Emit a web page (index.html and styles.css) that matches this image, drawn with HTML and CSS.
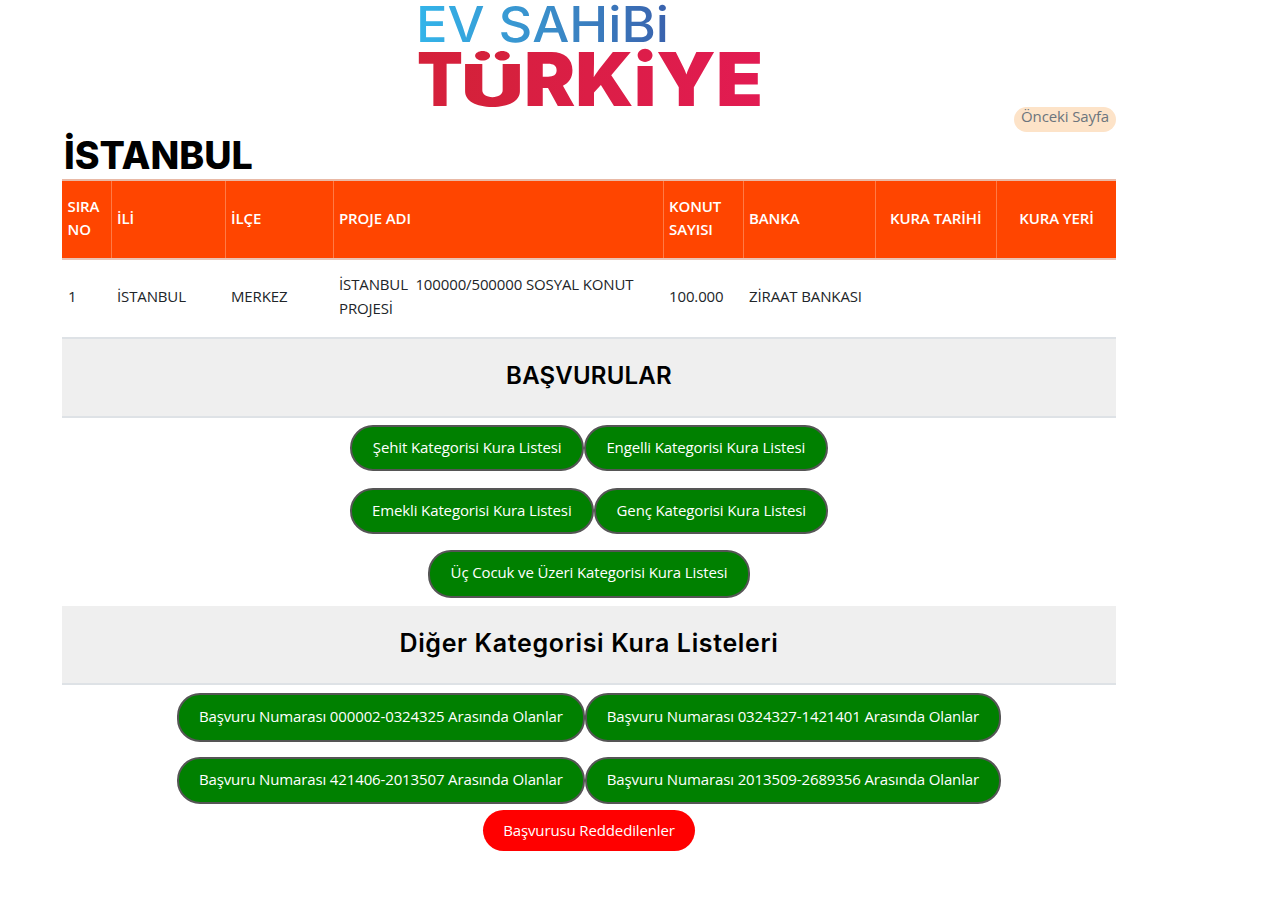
FILE: index.html
```html
<!DOCTYPE html>
<html lang="tr">
<head>
<meta charset="utf-8">
<title>İstanbul</title>
<link rel="stylesheet" href="styles.css">
</head>
<body>
<div class="page">
  <header class="logo-wrap">
    <svg class="logo" viewBox="0 0 350 110" width="350" height="110" role="img" aria-label="Ev Sahibi Türkiye">
      <defs>
        <linearGradient id="blue" gradientUnits="userSpaceOnUse" x1="0" x2="252" y1="0" y2="0">
          <stop offset="0" stop-color="#33b5ea"/>
          <stop offset="0.5" stop-color="#3a8fcb"/>
          <stop offset="1" stop-color="#3a62ad"/>
        </linearGradient>
        <linearGradient id="red" gradientUnits="userSpaceOnUse" x1="0" x2="344" y1="0" y2="0">
          <stop offset="0" stop-color="#d4213a"/>
          <stop offset="1" stop-color="#e21b52"/>
        </linearGradient>
      </defs>
      <text class="logo-top" x="0" y="42" textLength="253" lengthAdjust="spacingAndGlyphs" fill="url(#blue)">EV SAHiBi</text>
      <g fill="url(#red)">
        <text class="logo-bottom" x="1" y="106" textLength="46" lengthAdjust="spacingAndGlyphs">T</text>
        <text class="logo-bottom" transform="translate(45 106) scale(1 0.78)" x="0" y="0" textLength="63" lengthAdjust="spacingAndGlyphs">Ü</text>
        <text class="logo-bottom" x="108" y="106" textLength="239" lengthAdjust="spacingAndGlyphs">RKiYE</text>
      </g>
    </svg>
  </header>
  <div class="back-row"><a class="back" href="#">Önceki Sayfa</a></div>
  <h1 class="city">İSTANBUL</h1>
  <table class="projects">
    <colgroup>
      <col class="c1"><col class="c2"><col class="c3"><col class="c4"><col class="c5"><col class="c6"><col class="c7"><col class="c8">
    </colgroup>
    <thead>
      <tr>
        <th>SIRA NO</th><th>İLİ</th><th>İLÇE</th><th>PROJE ADI</th><th>KONUT SAYISI</th><th>BANKA</th>
        <th class="center">KURA TARİHİ</th><th class="center">KURA YERİ</th>
      </tr>
    </thead>
    <tbody>
      <tr>
        <td>1</td><td>İSTANBUL</td><td>MERKEZ</td>
        <td>İSTANBUL&nbsp; 100000/500000 SOSYAL KONUT PROJESİ</td>
        <td>100.000</td><td>ZİRAAT BANKASI</td><td></td><td></td>
      </tr>
    </tbody>
  </table>
  <h2 class="band">BAŞVURULAR</h2>
  <div class="group group-a">
    <div class="row"><a class="btn" href="#">Şehit Kategorisi Kura Listesi</a><a class="btn" href="#">Engelli Kategorisi Kura Listesi</a></div>
    <div class="row"><a class="btn" href="#">Emekli Kategorisi Kura Listesi</a><a class="btn" href="#">Genç Kategorisi Kura Listesi</a></div>
    <div class="row row-tight"><a class="btn btn-a2" href="#">Üç Cocuk ve Üzeri Kategorisi Kura Listesi</a></div>
  </div>
  <h2 class="band band-wide">Diğer Kategorisi Kura Listeleri</h2>
  <div class="group group-b">
    <div class="row"><a class="btn btn-b1" href="#">Başvuru Numarası 000002-0324325 Arasında Olanlar</a><a class="btn btn-b1" href="#">Başvuru Numarası 0324327-1421401 Arasında Olanlar</a></div>
    <div class="row"><a class="btn btn-b2" href="#">Başvuru Numarası 421406-2013507 Arasında Olanlar</a><a class="btn btn-b2" href="#">Başvuru Numarası 2013509-2689356 Arasında Olanlar</a></div>
    <div class="row row-red"><a class="btn btn-red" href="#">Başvurusu Reddedilenler</a></div>
  </div>
</div>
</body>
</html>
```
FILE: styles.css
```css
* { box-sizing: border-box; }
html, body { margin: 0; padding: 0; background: #fff; }
body {
  font-family: "Open Sans", "Noto Sans", "Liberation Sans", sans-serif;
  font-size: 15px;
  letter-spacing: -0.13px;
  color: #212529;
  height: 921px;
  overflow: hidden;
}
.page { width: 1054px; margin-left: 62px; }
.logo-wrap { display: flex; justify-content: center; height: 107px; }
.logo { display: block; flex: none; overflow: visible; margin-left: 3px; }
.logo-top { font-family: "Inter", sans-serif; font-size: 49px; font-weight: 500; letter-spacing: 0; }
.logo-bottom { font-family: "Inter", sans-serif; font-size: 74px; font-weight: 900; letter-spacing: 0; }
.back-row { display: flex; justify-content: flex-end; height: 25px; }
.back {
  background: #fde3c8;
  color: #6c757d;
  border-radius: 13px;
  padding: 0 7px;
  height: 25px;
  line-height: 19px;
  text-decoration: none;
}
.city {
  font-family: "Inter", sans-serif;
  font-weight: 800;
  font-size: 37.6px;
  letter-spacing: 0;
  line-height: 47px;
  height: 47px;
  margin: 0;
  padding-left: 2px;
  color: #000;
}
.projects { width: 100%; border-collapse: collapse; table-layout: fixed; }
.c1 { width: 49px; } .c2 { width: 114px; } .c3 { width: 108px; } .c4 { width: 330px; }
.c5 { width: 80px; } .c6 { width: 132px; } .c7 { width: 121px; } .c8 { width: 120px; }
.projects th {
  background: #ff4500;
  color: #fff;
  font-weight: 600;
  letter-spacing: -0.1px;
  text-align: left;
  height: 79px;
  padding: 0 5px 3px 5.5px;
  line-height: 23px;
  border-left: 1px solid #ff7a45;
  border-top: 2px solid #e9b9a6;
  border-bottom: 2px solid #e9c3b5;
}
.projects th:first-child { border-left: 0; }
.projects th.center { text-align: center; }
.projects td {
  height: 79px;
  padding: 0 5px 5px 6px;
  line-height: 24px;
  border-bottom: 2px solid #dee2e6;
}
.band {
  margin: 0;
  height: 79px;
  background: #efefef;
  border-bottom: 2px solid #dee2e6;
  color: #000;
  font-family: "Inter", sans-serif;
  font-weight: 600;
  font-size: 24px;
  letter-spacing: 0.2px;
  line-height: 74px;
  text-align: center;
}
.band-wide { font-size: 25px; letter-spacing: 0.65px; }
.group { display: flex; flex-direction: column; align-items: center; }
.group-a { height: 188px; padding-top: 7px; gap: 17px; }
.group-b { padding-top: 8px; gap: 15px; }
.row { display: flex; justify-content: center; }
.row-tight { margin-top: -1px; }
.row-red { margin-top: -9px; }
.btn {
  display: block;
  background: #008000;
  color: #fff;
  border: 2px solid #555;
  border-radius: 23px;
  text-decoration: none;
  text-align: center;
  height: 46px;
  line-height: 40px;
  padding: 0 20.5px;
  white-space: nowrap;
}
.btn-a2 { height: 48px; line-height: 40px; }
.btn-b1 { height: 49px; line-height: 43px; padding: 0 20px; }
.btn-b2 { height: 47px; line-height: 41px; padding: 0 20px; }
.btn-red {
  background: #ff0000;
  border: 0;
  height: 41px;
  line-height: 41px;
  padding: 0 20px;
}
```
